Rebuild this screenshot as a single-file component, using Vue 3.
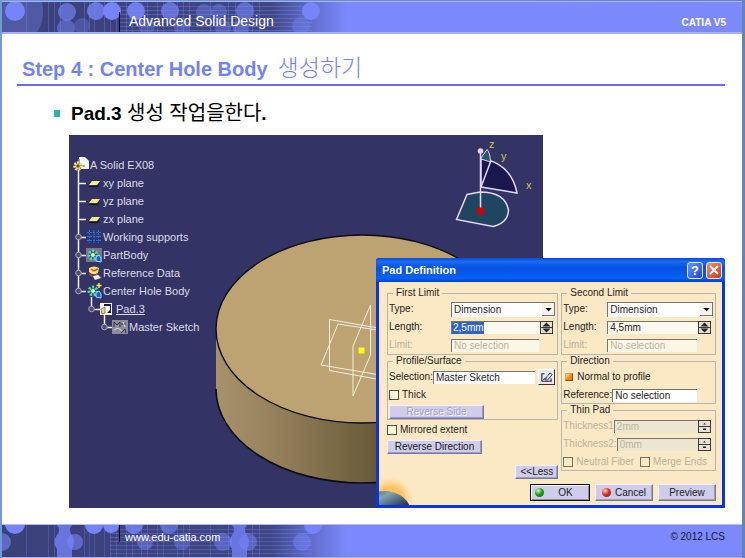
<script setup>
import { ref } from 'vue'

const tree = [
  { label: 'A Solid EX08', icon: 'part', level: 0 },
  { label: 'xy plane', icon: 'plane', level: 1 },
  { label: 'yz plane', icon: 'plane', level: 1 },
  { label: 'zx plane', icon: 'plane', level: 1 },
  { label: 'Working supports', icon: 'grid', level: 1 },
  { label: 'PartBody', icon: 'body', level: 1 },
  { label: 'Reference Data', icon: 'data', level: 1 },
  { label: 'Center Hole Body', icon: 'hole', level: 1 },
  { label: 'Pad.3', icon: 'pad', level: 2, current: true },
  { label: 'Master Sketch', icon: 'sketch', level: 3 },
]

const firstLength = ref('2,5mm')
const secondLength = ref('4,5mm')

const circles = [
  [13, 9, 10, 1], [65, 10, 9, 0.65], [94, 9, 9, 0.8], [110, 9, 9, 1], [64, 26, 9, 0.5],
  [80, 24, 8, 0.3], [134, 9, 9, 0.9], [168, 9, 9, 0.7], [145, 25, 8, 0.3], [180, 26, 8, 0.35],
  [202, 10, 8, 0.4], [217, 10, 8, 0.4], [221, 26, 8, 0.4], [243, 9, 9, 0.6], [239, 26, 8, 0.5],
  [299, 24, 9, 0.4], [309, 9, 9, 1],
]
const vLines = [24, 46, 52, 58, 82, 87, 92, 102, 108, 114, 124, 130, 139, 145, 155, 161, 175, 181, 187, 208, 226, 233, 250, 257]
const hLines = [4, 8, 12, 16, 20, 24, 28]
</script>

<template>
  <div class="page">
    <header class="band">
      <svg class="pattern" viewBox="0 0 345 32" preserveAspectRatio="xMinYMin slice" aria-hidden="true">
        <defs>
          <linearGradient id="fade">
            <stop offset="0" stop-color="#3a4078" />
            <stop offset="0.78" stop-color="#3f4684" />
            <stop offset="0.88" stop-color="#5c68c4" />
            <stop offset="1" stop-color="#7b89fc" />
          </linearGradient>
        </defs>
        <rect width="345" height="32" fill="url(#fade)" />
        <path d="M0 0H40Q44 18 34 32H0Z" fill="#505aa4" />
        <path v-for="x in vLines" :key="x" :d="`M${x}.5 0V32`" stroke="#8592ff" stroke-opacity=".3" />
        <path v-for="y in hLines" :key="y" :d="`M118 ${y}.5H310`" stroke="#8592ff" stroke-opacity=".35" />
        <circle v-for="([x, y, r, o], i) in circles" :key="i" :cx="x" :cy="y" :r="r" :fill-opacity="o" fill="#7684f8" />
      </svg>
      <div class="band-title">Advanced Solid Design</div>
      <div class="brand">CATIA V5</div>
    </header>

    <main>
      <h1>Step 4 : Center Hole Body <span>생성하기</span></h1>
      <p class="task"><i class="bullet"></i><span>Pad.3 <span class="ko">생성 작업을한다</span>.</span></p>

      <div class="stage">
        <section class="viewport">
          <svg class="scene" viewBox="69 135 474 373" preserveAspectRatio="xMinYMin slice" aria-hidden="true">
            <defs>
              <linearGradient id="side" gradientUnits="userSpaceOnUse" x1="216" y1="0" x2="508" y2="0">
                <stop offset="0" stop-color="#a8926a" />
                <stop offset="0.25" stop-color="#8f7c57" />
                <stop offset="0.55" stop-color="#675939" />
                <stop offset="1" stop-color="#8f7c57" />
              </linearGradient>
            </defs>
            <path d="M216 329V389A146 94 0 0 0 508 389V329Z" fill="url(#side)" />
            <path d="M216 389A146 94 0 0 0 508 389" fill="none" stroke="#0c0c14" stroke-width="1.600" />
            <ellipse cx="362" cy="329" rx="146" ry="94" fill="#bda371" stroke="#0c0c14" stroke-width="1.400" />
            <g fill="none" stroke="#f2eee2" stroke-width="1">
              <path d="M370.500 305L353 346V396L370.500 355Z" />
              <path d="M410 333.500L329.500 319.500V370.500L410 385" />
              <path d="M410 335L338 324L321 365L410 380" />
            </g>
            <rect x="358.500" y="347.500" width="6" height="6" fill="#ff0" />

            <path d="M467 194.500L456.500 219.500L493 226.500Q508 223 508.500 210Q505 192 480 192Z" fill="#204560" stroke="#e4d8f4" stroke-width="1.500" />
            <path d="M481 187L517 193Q511 163 481 158.500Z" fill="#1a1650" stroke="#e4d8f4" stroke-width="1.500" />
            <path d="M481 158L487 149.500Q490 152 490.500 162L481 159Z" fill="#26586a" stroke="#e4d8f4" />
            <path d="M490.500 162L481 187M480.500 150V210" stroke="#e4d8f4" stroke-width="1.500" />
            <circle cx="480.500" cy="151" r="2.800" fill="#e4d8f4" />
            <rect x="477" y="207.500" width="7" height="7" fill="#d40000" />
            <g class="axes">
              <text x="489" y="148">z</text>
              <text x="501" y="160">y</text>
              <text x="526" y="189">x</text>
            </g>

            <path d="M78.500 170V292M79 183.500H86M79 201.500H86M79 219.500H86M79 237.500H86M79 255.500H86M79 273.500H86M79 291.500H86M91.500 297V309.500H100M104.500 315V327.500H113" fill="none" stroke="#f4f4f8" stroke-width="1.500" />
            <g fill="#505068" stroke="#a8a8b8" stroke-width="1">
              <circle cx="78.500" cy="237" r="2.800" />
              <circle cx="78.500" cy="255" r="2.800" />
              <circle cx="78.500" cy="273" r="2.800" />
              <circle cx="78.500" cy="291" r="2.800" />
              <circle cx="91.500" cy="309" r="2.800" />
              <circle cx="104.500" cy="327" r="2.800" />
            </g>
          </svg>

          <ul class="tree">
            <li v-for="node in tree" :key="node.label" :class="['level-' + node.level, { current: node.current }]">
              <svg viewBox="0 0 16 16" aria-hidden="true">
                <g v-if="node.icon === 'part'">
                  <path d="M6 0H12L16 4V12H6Z" fill="#fff" />
                  <path d="M6 2V9H12" fill="none" stroke="#48a0b8" stroke-width="1.500" />
                  <circle cx="5" cy="9" r="3.500" fill="#555030" stroke="#ffe070" stroke-width="2.500" stroke-dasharray="2 1" />
                  <circle cx="5" cy="9" r="2.200" fill="none" stroke="#ffe070" />
                </g>
                <g v-else-if="node.icon === 'plane'">
                  <path d="M3 11H11L14 7L12 12H3Z" fill="#101010" />
                  <path d="M3 10L6 6H14L11 10Z" fill="#f6ee80" />
                </g>
                <path v-else-if="node.icon === 'grid'" d="M1 3.500H15M1 7.500H15M1 11.500H15M3.500 1V14M8 1V14M12.500 1V14" fill="none" stroke="#1878e8" stroke-dasharray="2 1" />
                <g v-else-if="node.icon === 'body' || node.icon === 'hole'">
                  <rect v-if="node.icon === 'body'" x="0" y="1" width="16" height="14" fill="#77778a" />
                  <circle cx="7" cy="8" r="4" fill="#1a5a78" stroke="#58d8b8" stroke-width="3" stroke-dasharray="2 1.500" />
                  <circle cx="7" cy="8" r="2" fill="#e8f090" />
                  <path d="M10 14V10L13 8L15 11V15Z" fill="#1060d8" stroke="#a0e0ff" />
                  <path v-if="node.icon === 'hole'" d="M13 0V5M10.500 2.500H15.500" stroke="#ffee40" stroke-width="1.500" />
                </g>
                <g v-else-if="node.icon === 'data'">
                  <path d="M3 3Q8 0 13 3L12 8Q7 11 3 7Z" fill="#ffe870" />
                  <path d="M5 4L8 6L12 4M3 9L9 13L14 12L10 9" fill="none" stroke="#c04830" stroke-width="1.500" />
                  <path d="M7 11L12 10L15 13L9 15Z" fill="#f4f4ff" />
                </g>
                <g v-else-if="node.icon === 'pad'">
                  <rect x="1" y="2" width="12" height="12" fill="#f8f8f8" />
                  <path d="M5 5V3H12V12H8L11 9V5Z" fill="#181838" />
                  <path d="M2 8L6 6V12L3 13Z" fill="#f0d850" stroke="#333" stroke-width=".5" />
                </g>
                <g v-else>
                  <rect x="0" y="1" width="16" height="14" fill="#8c8c98" />
                  <path d="M2 8V3L5 6L8 3V8M9 14L13 10L14 14M9 5H14" fill="none" stroke="#333" />
                  <path d="M2 11L6 9L10 12M11 3L13 8" fill="none" stroke="#dcdce4" />
                </g>
              </svg>
              <span>{{ node.label }}</span>
            </li>
          </ul>
        </section>

        <form class="dialog" @submit.prevent>
          <div class="titlebar">
            <strong>Pad Definition</strong>
            <button type="button" class="help" aria-label="Help">?</button>
            <button type="button" class="close" aria-label="Close">
              <svg viewBox="0 0 10 10"><path d="M1 1L9 9M9 1L1 9" stroke="#fff" stroke-width="2" /></svg>
            </button>
          </div>

          <div class="body">
            <div class="columns">
              <div class="column">
                <fieldset class="limit">
                  <legend>First Limit</legend>
                  <div class="row">
                    <label for="first-type">Type:</label>
                    <span class="combo">
                      <select id="first-type"><option>Dimension</option></select>
                      <svg viewBox="0 0 11 11"><path d="M3 4.500H9L6 7.500Z" /></svg>
                    </span>
                  </div>
                  <div class="row">
                    <label for="first-length">Length:</label>
                    <span class="field selected"><input id="first-length" v-model="firstLength" /></span>
                    <svg class="spin" viewBox="0 0 13 13"><rect x=".5" y=".5" width="12" height="12" /><path d="M1 6.500H12" class="rule" /><path d="M2.500 5.500L6.500 1.500L10.500 5.500ZM2.500 7.500L6.500 11.500L10.500 7.500Z" class="tri" /></svg>
                  </div>
                  <div class="row off">
                    <label for="first-limit">Limit:</label>
                    <span class="field short"><input id="first-limit" value="No selection" disabled /></span>
                  </div>
                </fieldset>

                <fieldset>
                  <legend>Profile/Surface</legend>
                  <div class="row">
                    <label for="profile">Selection:</label>
                    <span class="field white"><input id="profile" value="Master Sketch" /></span>
                    <button type="button" class="sketch" aria-label="Sketch">
                      <svg viewBox="0 0 14 14"><path d="M2 11V3L5 3M2 11H12V8" fill="none" stroke="#223" stroke-width="1.200" /><path d="M5 9L11 2L13 4L8 10Z" fill="#fff" stroke="#223" /><path d="M3 10Q6 6 8 9" fill="none" stroke="#2040d0" /></svg>
                    </button>
                  </div>
                  <div class="row"><label class="check"><input type="checkbox" /> Thick</label></div>
                  <button type="button" class="push wide" disabled>Reverse Side</button>
                </fieldset>

                <div class="row mirror"><label class="check"><input type="checkbox" /> Mirrored extent</label></div>
                <button type="button" class="push wide">Reverse Direction</button>
                <button type="button" class="push less">&lt;&lt;Less</button>
              </div>

              <div class="column">
                <fieldset class="limit second">
                  <legend>Second Limit</legend>
                  <div class="row">
                    <label for="second-type">Type:</label>
                    <span class="combo">
                      <select id="second-type"><option>Dimension</option></select>
                      <svg viewBox="0 0 11 11"><path d="M3 4.500H9L6 7.500Z" /></svg>
                    </span>
                  </div>
                  <div class="row">
                    <label for="second-length">Length:</label>
                    <span class="field"><input id="second-length" v-model="secondLength" /></span>
                    <svg class="spin" viewBox="0 0 13 13"><rect x=".5" y=".5" width="12" height="12" /><path d="M1 6.500H12" class="rule" /><path d="M2.500 5.500L6.500 1.500L10.500 5.500ZM2.500 7.500L6.500 11.500L10.500 7.500Z" class="tri" /></svg>
                  </div>
                  <div class="row off">
                    <label for="second-limit">Limit:</label>
                    <span class="field short"><input id="second-limit" value="No selection" disabled /></span>
                  </div>
                </fieldset>

                <fieldset>
                  <legend>Direction</legend>
                  <div class="row"><label class="check normal"><input type="checkbox" checked /> Normal to profile</label></div>
                  <div class="row">
                    <label for="reference">Reference:</label>
                    <span class="field short white"><input id="reference" value="No selection" /></span>
                  </div>
                </fieldset>

                <fieldset>
                  <legend>Thin Pad</legend>
                  <div v-for="(value, i) in ['2mm', '0mm']" :key="i" class="row off">
                    <label :for="'thickness-' + i">Thickness{{ i ? '2:' : '1' }}</label>
                    <span class="field"><input :id="'thickness-' + i" :value="value" disabled /></span>
                    <svg class="spin thin" viewBox="0 0 13 13"><rect x=".5" y=".5" width="12" height="12" /><path d="M1 6.500H12" class="rule" /><path d="M5 4.500L6.500 3L8 4.500ZM5 8.500H8V10H5Z" class="tri" /></svg>
                  </div>
                  <div class="row off">
                    <label class="check"><input type="checkbox" disabled /> Neutral Fiber</label>
                    <label class="check"><input type="checkbox" disabled /> Merge Ends</label>
                  </div>
                </fieldset>
              </div>
            </div>

            <svg class="planet" viewBox="0 0 46 30" aria-hidden="true">
              <defs>
                <radialGradient id="glow" gradientUnits="userSpaceOnUse" cx="12" cy="24" r="24">
                  <stop offset="0.5" stop-color="#ffc060" />
                  <stop offset="0.75" stop-color="#ffd890" stop-opacity=".6" />
                  <stop offset="1" stop-color="#fbe8c4" stop-opacity="0" />
                </radialGradient>
                <linearGradient id="globe" x2="0.600" y2="1">
                  <stop offset="0" stop-color="#404850" />
                  <stop offset="0.3" stop-color="#7fa4b4" />
                  <stop offset="0.6" stop-color="#31404c" />
                  <stop offset="1" stop-color="#181818" />
                </linearGradient>
              </defs>
              <rect width="46" height="30" fill="url(#glow)" />
              <ellipse cx="6" cy="38" rx="26" ry="22" fill="url(#globe)" />
            </svg>

            <div class="actions">
              <button type="submit" class="push default"><i class="ball green"></i><span>OK</span></button>
              <button type="button" class="push"><i class="ball red"></i><span>Cancel</span></button>
              <button type="button" class="push"><span>Preview</span></button>
            </div>
          </div>
        </form>
      </div>
    </main>

    <footer class="band foot">
      <svg class="pattern" viewBox="0 0 345 32" preserveAspectRatio="xMinYMin slice" aria-hidden="true">
        <rect width="345" height="32" fill="url(#fade)" />
        <path v-for="x in vLines" :key="x" :d="`M${x}.5 0V32`" stroke="#8592ff" stroke-opacity=".25" />
        <path v-for="y in hLines" :key="y" :d="`M108 ${y}.5H310`" stroke="#8592ff" stroke-opacity=".3" />
        <path d="M55 0H70Q66 5 70 10Q74 17 70 24V32H55V24Q50 17 55 10Q59 5 55 0ZM230 0H245Q241 5 245 10Q249 17 245 24V32H230V24Q225 17 230 10Q234 5 230 0Z" fill="#6875de" />
        <g fill="#7684f8">
          <circle cx="13" cy="-1" r="10" />
          <circle cx="0" cy="17" r="9" fill-opacity=".6" />
          <circle cx="73" cy="17" r="8" fill-opacity=".6" />
          <circle cx="92" cy="0" r="9" />
          <circle cx="109" cy="0" r="8" />
          <circle cx="132" cy="0" r="9" fill-opacity=".8" />
          <circle cx="143" cy="17" r="8" fill-opacity=".5" />
          <circle cx="167" cy="0" r="9" fill-opacity=".6" />
          <circle cx="180" cy="17" r="8" fill-opacity=".4" />
          <circle cx="221" cy="17" r="9" fill-opacity=".5" />
          <circle cx="246" cy="17" r="9" fill-opacity=".5" />
          <circle cx="300" cy="17" r="9" fill-opacity=".5" />
          <circle cx="311" cy="0" r="9" />
        </g>
      </svg>
      <a class="band-title" href="#">www.edu-catia.com</a>
      <small>© 2012 LCS</small>
    </footer>
  </div>
</template>

<style>
body {
  margin: 0;
}
</style>

<style scoped>
* {
  box-sizing: border-box;
}
.page {
  display: flex;
  flex-direction: column;
  min-height: 100vh;
  padding: 1px 3px 0 2px;
  background: linear-gradient(90deg, #6f9ad4, #6484b4);
  font-family: "Liberation Sans", "Noto Sans CJK KR", sans-serif;
}
.band {
  display: flex;
  position: relative;
  height: 33px;
  background: #7b89fc;
  border-top: 1px solid #a6b2fa;
  border-bottom: 2px solid #a6b0fa;
  color: #fff;
}
.pattern {
  position: absolute;
  inset: 0 auto auto 0;
  width: 345px;
  height: 100%;
}
.band-title {
  position: relative;
  align-self: flex-end;
  height: 20px;
  margin-left: 117px;
  padding-left: 9px;
  border-left: 1px solid #0a0a20;
  color: #fff;
  font-size: 14px;
  line-height: 18px;
  text-decoration: none;
}
.brand {
  margin: 14px 16px 0 auto;
  font-size: 10px;
  font-weight: bold;
  line-height: 14px;
}
main {
  flex: 1;
  padding: 22px 17px 16px 15px;
  background: #fff;
}
h1 {
  display: flex;
  align-items: baseline;
  gap: 10px;
  height: 30px;
  margin: 0;
  padding: 0 5px;
  border-bottom: 2px solid #6e66f6;
  color: #7283f8;
  font-size: 20px;
  line-height: 24px;
}
h1 span {
  font-size: 23px;
  font-weight: 300;
}
.task {
  display: flex;
  align-items: center;
  gap: 11px;
  height: 28px;
  margin: 13px 0 8px 37px;
  font-size: 19px;
  font-weight: bold;
  line-height: 28px;
}
.task .ko {
  font-size: 20px;
  font-weight: 400;
}
.bullet {
  width: 6px;
  height: 7px;
  background: #2fb3b0;
}
.stage {
  position: relative;
  margin-left: 52px;
}
.viewport {
  position: relative;
  margin-right: 182px;
  padding: 21px 0 172px;
  overflow: hidden;
  background: #333366;
}
.scene {
  position: absolute;
  inset: 0 auto auto 0;
  width: 474px;
  height: 373px;
}
.axes {
  fill: #cccc3c;
  font-size: 11px;
}
.tree {
  position: relative;
  margin: 0;
  padding: 0;
  list-style: none;
  color: #dcdce8;
  font-size: 11px;
  line-height: 18px;
}
.tree li {
  display: flex;
  align-items: center;
  gap: 1px;
  height: 18px;
}
.tree svg {
  width: 16px;
  height: 16px;
}
.level-0 { padding-left: 4px; }
.level-1 { padding-left: 17px; }
.level-2 { padding-left: 30px; }
.level-3 { padding-left: 43px; }
.current span {
  text-decoration: underline;
}

.dialog {
  position: absolute;
  right: 0;
  bottom: 0;
  width: 349px;
  background: #0a35dc;
  padding: 0 3px 3px;
  border-radius: 3px 3px 0 0;
  font-size: 10px;
  line-height: 12px;
  color: #26241e;
}
.titlebar {
  display: flex;
  align-items: center;
  gap: 3px;
  height: 24px;
  margin: 0 -3px;
  padding: 0 3px 0 6px;
  border-radius: 3px 3px 0 0;
  background: linear-gradient(#0a4ad8, #1a6cf8 15%, #0452e0 40%, #0660f8 85%, #0440c0);
  color: #fff;
  font-size: 11px;
}
.titlebar strong {
  flex: 1;
}
.titlebar button {
  display: grid;
  place-items: center;
  width: 16px;
  height: 17px;
  padding: 0;
  border: 1px solid #e8ecff;
  border-radius: 3px;
  background: linear-gradient(135deg, #6a94f8, #1c48d0);
  color: #fff;
  font: bold 13px/15px "Liberation Sans", sans-serif;
}
.titlebar .close {
  background: linear-gradient(135deg, #f09070, #c83c14);
}
.close svg {
  width: 10px;
  height: 10px;
}
.body {
  position: relative;
  padding: 5px 6px 4px 8px;
  background: #fbe8c4;
}
.columns {
  display: grid;
  grid-template-columns: 172fr 154fr;
  gap: 3px;
}
.column {
  display: flex;
  flex-direction: column;
}
fieldset {
  display: flex;
  flex-direction: column;
  gap: 2px;
  min-width: 0;
  margin: 0;
  padding: 2px 2px 0 1px;
  border: 1px solid #b9b6b0;
}
.limit {
  padding-bottom: 1px;
}
legend {
  height: 12px;
  margin-left: 4px;
  padding: 0 3px;
  line-height: 12px;
}
.row {
  display: flex;
  align-items: center;
  height: 16px;
}
.row label {
  white-space: nowrap;
}
.off {
  color: #bcb29c;
}
.limit .row > label {
  width: 62px;
}
.second .row > label {
  width: 44px;
}
.combo,
.field {
  display: flex;
  flex: 1;
  min-width: 0;
  height: 13px;
  background: #fff;
  border-top: 1px solid #77746e;
  border-left: 1px solid #77746e;
}
.combo {
  height: 15px;
  align-items: center;
}
.combo select,
.field input {
  flex: 1;
  min-width: 0;
  width: 100%;
  height: 100%;
  margin: 0;
  padding: 0 0 0 2px;
  border: 0;
  border-radius: 0;
  appearance: none;
  background: transparent;
  color: inherit;
  font: 10px/12px "Liberation Sans", sans-serif;
}
.combo svg {
  width: 13px;
  height: 13px;
  background: #f8f2e8;
  border-right: 1px solid #77746e;
  border-bottom: 1px solid #77746e;
}
.field {
  background: #fefaf0;
}
.field.white {
  background: #fff;
}
.field.short {
  margin-right: 16px;
}
.field.selected input {
  flex: none;
  width: 32px;
  padding: 0 0 0 1px;
  background: #3163c5;
  color: #fff;
}
.off .field {
  background: #ece6d0;
}
.off .field.short {
  background: #fcf6e6;
}
.spin {
  width: 13px;
  height: 13px;
  margin-right: 2px;
  fill: #e8e0d0;
  stroke: #3a3a3a;
}
.spin .tri {
  fill: #222;
  stroke: none;
}
.check {
  display: flex;
  align-items: center;
  gap: 3px;
  margin-right: 6px;
}
.check input {
  width: 10px;
  height: 10px;
  margin: 0;
  border: 1px solid #4c5040;
  appearance: none;
  background: #fdf8dc;
}
.off .check input {
  background: #fbe8c4;
  border-color: #77705c;
}
.check.normal {
  gap: 4px;
  padding-left: 2px;
}
.check.normal input {
  width: 8px;
  height: 8px;
  border-color: #d8a060 #8a4c10 #8a4c10 #d8a060;
  background: linear-gradient(135deg, #ffd890, #e88818 60%);
}
.sketch {
  width: 17px;
  height: 16px;
  margin-left: 3px;
  padding: 0 1px;
  border: 1px solid;
  border-color: #fff #333 #333 #fff;
  background: #ece8f0;
}
.sketch svg {
  display: block;
  width: 13px;
  height: 13px;
}
.push {
  display: flex;
  align-items: center;
  justify-content: center;
  height: 14px;
  padding: 0 4px;
  border: 1px solid;
  border-color: #f2f0fc #77779c #77779c #f2f0fc;
  box-shadow: inset -1px -1px #9c9cc4;
  background: #cfcdea;
  color: #1a1a24;
  font: 10px/12px "Liberation Sans", sans-serif;
}
.push.wide {
  width: 95px;
}
.push:disabled {
  color: #a3a2bc;
  text-shadow: 1px 1px #f4f4ff;
}
.mirror {
  margin: 2px 0;
}
.less {
  align-self: flex-end;
  margin-top: 11px;
}
.planet {
  position: absolute;
  left: 0;
  bottom: 0;
  width: 46px;
  height: 30px;
}
.actions {
  display: flex;
  justify-content: flex-end;
  gap: 5px;
  margin-top: 5px;
}
.actions .push {
  width: 58px;
  height: 17px;
  gap: 4px;
}
.actions .default {
  width: 60px;
  gap: 14px;
  padding-right: 16px;
  border-color: #111;
  box-shadow: inset 1px 1px #fff, inset -1px -1px #8c8cb4;
}
.ball {
  width: 9px;
  height: 9px;
  border-radius: 50%;
}
.green {
  background: radial-gradient(circle at 35% 30%, #c8ffc0, #22a020 45%, #0c5010);
}
.red {
  background: radial-gradient(circle at 35% 30%, #ffd0c0, #e03020 45%, #801008);
}
.foot {
  height: 34px;
  border-top: 1px solid #b4bcfc;
  border-bottom: 1px solid #a6b0fa;
}
.foot .band-title {
  align-self: flex-start;
  height: 17px;
  padding-left: 5px;
  font-size: 11px;
  line-height: 24px;
}
small {
  margin: 5px 17px 0 auto;
  color: #14143c;
  font-size: 10px;
  line-height: 14px;
}
</style>
